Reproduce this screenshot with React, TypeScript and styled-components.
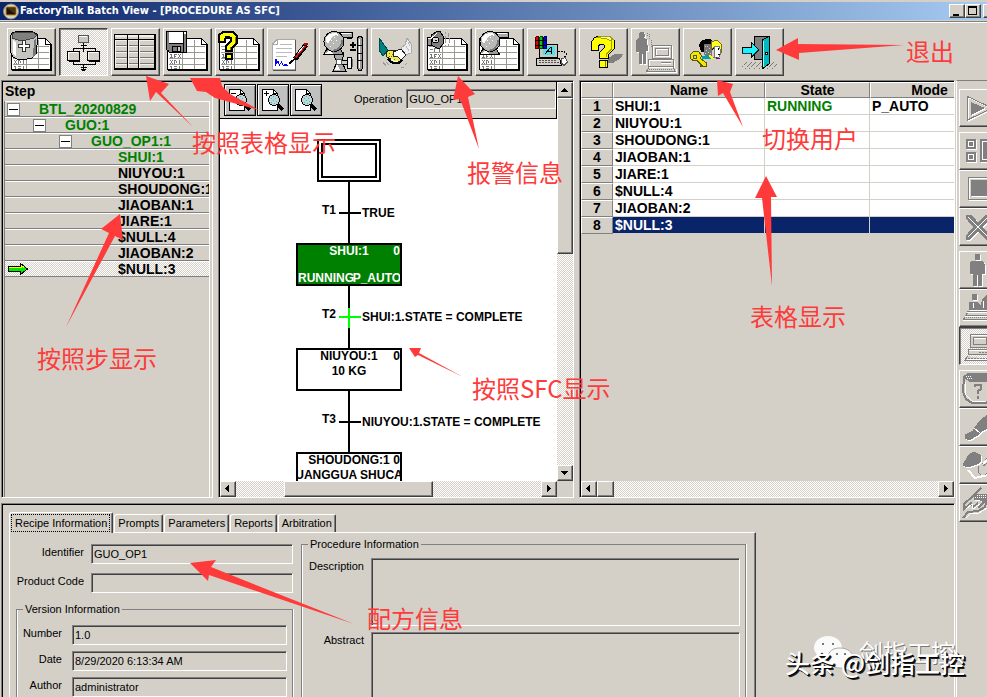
import React from "react";
import styled, { createGlobalStyle, css } from "styled-components";

const face = "#d4d0c8";
const dark = "#404040";
const mid = "#808080";
const navy = "#0a246a";
const green = "#008000";
const red = "#fe3b3a";
const dither = css`
  background: repeating-conic-gradient(#ffffff 0 25%, ${face} 0 50%) 0 0 / 2px 2px;
`;

const GlobalStyle = createGlobalStyle`
  * { box-sizing: border-box; }
  body { margin: 0; background: ${face}; overflow: hidden; }
  button, input, textarea { font: inherit; color: inherit; }
`;

const Window = styled.div`
  position: relative;
  display: flex;
  flex-direction: column;
  height: 100vh;
  padding-top: 2px;
  overflow: hidden;
  background: ${face};
  color: #000;
  font: 11px/14px "Liberation Sans", Arial, sans-serif;
`;

const TitleBar = styled.header`
  display: flex;
  align-items: center;
  flex: none;
  height: 18px;
  padding-left: 3px;
  background: linear-gradient(90deg, ${navy}, #a6caf0);
  color: #fff;
  overflow: hidden;
`;
const Title = styled.h1`
  flex: 1;
  margin: 0 0 0 1px;
  font: bold 11px/18px "DejaVu Sans Condensed", "DejaVu Sans", sans-serif;
  white-space: nowrap;
`;
const Caption = styled.div`
  display: flex;
  flex: none;
  margin-right: -12px;
`;
const raised = css`
  border: 1px solid;
  border-color: #fff ${dark} ${dark} #fff;
  box-shadow: inset -1px -1px ${mid};
  background: ${face};
  padding: 0;
`;
const CaptionButton = styled.button<{ $gap?: boolean }>`
  ${raised}
  width: 16px;
  height: 14px;
  margin-left: ${(p) => (p.$gap ? "2px" : "0")};
  svg { display: block; }
`;

const Toolbar = styled.nav`
  display: flex;
  flex: none;
  gap: 3px;
  margin-top: 1px;
  padding: 6px 7px 4px;
  border-top: 1px solid ${mid};
  box-shadow: inset 0 1px #fff;
  height: 59px;
`;
const sunken = css`
  border: 1px solid;
  border-color: ${dark} #fff #fff ${dark};
  box-shadow: inset 1px 1px ${mid};
  padding: 0;
  ${dither}
`;
const ToolButton = styled.button<{ $pressed?: boolean }>`
  ${(p) => (p.$pressed ? sunken : raised)}
  flex: none;
  width: 49px;
  height: 48px;
  svg { display: block; margin: -1px; }
`;

const Body = styled.div`
  display: flex;
  flex: 1;
  min-height: 0;
`;
const Work = styled.div`
  display: flex;
  flex-direction: column;
  flex: 1;
  min-width: 0;
  gap: 5px;
  padding: 0 1px;
`;
const Panes = styled.main`
  display: grid;
  flex: 1;
  min-height: 0;
  grid-template-columns: 212fr 356fr 376fr;
  gap: 5px;
`;
const Pane = styled.section`
  display: flex;
  flex-direction: column;
  min-width: 0;
  min-height: 0;
  overflow: hidden;
  border: 1px solid;
  border-color: ${mid} #fff #fff ${mid};
  box-shadow: inset 1px 1px #000;
  padding: 1px 0 0 1px;
`;

const StepHeader = styled.h2`
  flex: none;
  margin: 0;
  padding: 0 2px;
  font: bold 14px/19px "Liberation Sans", Arial, sans-serif;
`;
const StepList = styled.ul`
  flex: 1;
  margin: 0 2px 0 1px;
  padding: 0;
  list-style: none;
  border-left: 1px solid ${mid};
  border-right: 1px solid #fff;
  font: bold 14px/14px "Liberation Sans", Arial, sans-serif;
`;
const StepRow = styled.li<{ $level: number; $active?: boolean; $current?: boolean }>`
  display: flex;
  align-items: center;
  height: 16px;
  padding-left: ${(p) => 2 + p.$level * 26}px;
  overflow: hidden;
  white-space: nowrap;
  border-top: 1px solid #fff;
  border-bottom: 1px solid ${mid};
  color: ${(p) => (p.$active ? green : "#000")};
  ${(p) => p.$current && dither}
`;
const StepName = styled.span<{ $leaf?: boolean }>`
  padding-left: ${(p) => (p.$leaf ? "7px" : "19px")};
`;
const Toggle = styled.button`
  flex: none;
  width: 13px;
  height: 13px;
  padding: 0;
  border: 1px solid ${mid};
  background: #fff;
  svg { display: block; }
`;
const CurrentMark = styled.span`
  flex: none;
  width: 104px;
  svg { display: block; }
`;

const ScrollGrid = styled.div`
  display: grid;
  flex: 1;
  min-height: 0;
  grid-template: minmax(0, 1fr) 16px / minmax(0, 1fr) 16px;
`;
const SfcMain = styled.div`
  display: flex;
  flex-direction: column;
  min-width: 0;
  background: #fff;
`;
const SfcBar = styled.div`
  display: flex;
  align-items: flex-start;
  flex: none;
  gap: 1px;
  height: 37px;
  padding: 2px 0 0 4px;
  background: ${face};
  border-right: 1px solid #000;
  border-bottom: 1px solid #000;
`;
const ZoomButton = styled.button`
  flex: none;
  width: 32px;
  height: 32px;
  padding: 0;
  background: #c0c0c0;
  border: 1px solid #000;
  box-shadow: inset 1px 1px #fff, inset -1px -1px ${mid};
  svg { display: block; }
`;
const OperationField = styled.label`
  display: flex;
  flex: 1;
  min-width: 0;
  align-items: center;
  gap: 4px;
  margin: 5px 0 0 31px;
`;
const fieldBox = css`
  min-width: 0;
  border: 1px solid;
  border-color: ${mid} #fff #fff ${mid};
  border-radius: 0;
  box-shadow: inset 1px 1px ${dark};
  background: ${face};
  outline: 0;
`;
const TextField = styled.input`
  ${fieldBox}
  flex: 1;
  height: 20px;
  padding: 0 2px;
`;
const Canvas = styled.div`
  position: relative;
  flex: 1;
  overflow: hidden;
  font: bold 12px/14px "Liberation Sans", Arial, sans-serif;
  white-space: nowrap;
`;
const StartNode = styled.div`
  position: absolute;
  left: 97px;
  top: 20px;
  width: 64px;
  height: 43px;
  border: 6px double #000;
`;
const Link = styled.div<{ $top: number; $height: number; $lit?: boolean }>`
  position: absolute;
  left: 128px;
  top: ${(p) => p.$top}px;
  width: 2px;
  height: ${(p) => p.$height}px;
  background: ${(p) => (p.$lit ? "#00ff00" : "#000")};
`;
const Transition = styled.div<{ $top: number; $lit?: boolean }>`
  position: absolute;
  left: 119px;
  top: ${(p) => p.$top}px;
  width: 22px;
  height: 2px;
  background: ${(p) => (p.$lit ? "#00ff00" : "#000")};
`;
const TransitionName = styled.span`
  position: absolute;
  right: 25px;
  bottom: -3px;
`;
const Condition = styled.span`
  position: absolute;
  left: 23px;
  top: -6px;
`;
const StepNode = styled.div<{ $top: number; $running?: boolean }>`
  position: absolute;
  left: 76px;
  top: ${(p) => p.$top}px;
  display: flex;
  flex-direction: column;
  width: 106px;
  height: 43px;
  overflow: hidden;
  border: 2px solid #000;
  text-align: center;
  line-height: 13px;
  background: ${(p) => (p.$running ? green : "#fff")};
  color: ${(p) => (p.$running ? "#fff" : "#000")};
`;
const NodeIndex = styled.span`
  position: absolute;
  right: 0;
  top: 0;
`;
const NodeStatus = styled.div`
  display: flex;
  justify-content: space-between;
  margin-top: auto;
  line-height: 12px;
  span { min-width: 0; }
`;
const NodeText = styled.div`
  display: flex;
  justify-content: center;
  line-height: 16px;
`;

const ScrollTrack = styled.div<{ $vertical?: boolean }>`
  display: flex;
  flex-direction: ${(p) => (p.$vertical ? "column" : "row")};
  min-width: 0;
  min-height: 0;
  ${dither}
`;
const ScrollButton = styled.button`
  ${raised}
  flex: none;
  width: 16px;
  height: 16px;
  svg { display: block; }
`;
const Thumb = styled.div<{ $size: number }>`
  ${raised}
  flex: ${(p) => p.$size} 1 0;
`;
const Gap = styled.div<{ $share: number }>`
  flex: ${(p) => p.$share} 1 0;
`;

const TableArea = styled.div`
  flex: 1;
  overflow: hidden;
`;
const StateTable = styled.table`
  width: 408px;
  table-layout: fixed;
  border-collapse: separate;
  border-spacing: 0;
  font: bold 14px/16px "Liberation Sans", Arial, sans-serif;
`;
const NumberCol = styled.col` width: 32px; `;
const NameCol = styled.col` width: 152px; `;
const StateCol = styled.col` width: 105px; `;
const ModeCol = styled.col` width: 119px; `;
const HeadCell = styled.th`
  height: 16px;
  padding: 0;
  line-height: 14px;
  border: 1px solid;
  border-color: #fff ${mid} ${mid} #fff;
`;
const RowHead = styled.th`
  height: 17px;
  padding: 0;
  line-height: 15px;
  border: 1px solid;
  border-color: #fff ${mid} ${mid} #fff;
`;
const Cell = styled.td<{ $selected?: boolean; $running?: boolean }>`
  height: 17px;
  padding: 0 2px;
  background: ${(p) => (p.$selected ? navy : "#fff")};
  color: ${(p) => (p.$selected ? "#fff" : p.$running ? green : "#000")};
  border: 0 solid ${face};
  border-bottom-width: 1px;
  border-right-width: 1px;
`;

const Details = styled.section`
  flex: none;
  height: 194px;
  overflow: hidden;
  border-top: 1px solid ${mid};
  border-left: 1px solid ${mid};
  border-right: 1px solid #fff;
  box-shadow: inset 1px 1px #000;
  padding: 8px 0 0 7px;
`;
const Tabs = styled.div`
  display: flex;
  align-items: flex-end;
  height: 20px;
`;
const Tab = styled.button<{ $selected?: boolean }>`
  position: relative;
  height: ${(p) => (p.$selected ? "21px" : "18px")};
  margin: ${(p) => (p.$selected ? "0 0 -1px" : "0 0 0 1px")};
  padding: 0 ${(p) => (p.$selected ? "5px" : "3px")};
  background: ${face};
  border: 1px solid;
  border-color: #fff ${dark} transparent #fff;
  border-bottom: 0;
  border-radius: 3px 2px 0 0;
  box-shadow: inset -1px 0 ${mid};
  white-space: nowrap;
  line-height: 17px;
`;
const Focus = styled.span`
  position: absolute;
  inset: 1px 2px 1px 1px;
  border: 1px dotted #000;
`;
const TabPage = styled.form`
  display: grid;
  grid-template-columns: 284px minmax(0, 1fr);
  gap: 1px;
  width: 79%;
  min-width: 600px;
  height: 240px;
  padding: 0 9px 0 6px;
  border: 1px solid;
  border-color: #fff ${dark} ${dark} #fff;
  box-shadow: inset -1px 0 ${mid};
`;
const Column = styled.div`
  display: flex;
  flex-direction: column;
  gap: 9px;
  padding: 11px 7px 0 0;
`;
const Field = styled.label<{ $label: number; $gap?: number }>`
  display: grid;
  grid-template-columns: ${(p) => p.$label}px minmax(0, 1fr);
  gap: ${(p) => p.$gap ?? 7}px;
  line-height: 17px;
`;
const LabelText = styled.span`
  text-align: right;
`;
const Group = styled.fieldset`
  display: flex;
  flex-direction: column;
  gap: 6px;
  min-width: 0;
  margin: 0;
  padding: 3px 5px 8px 4px;
  border: 1px solid ${mid};
  box-shadow: inset 1px 0 #fff, 1px 0 #fff;
`;
const Legend = styled.legend`
  margin-left: 2px;
  padding: 0 2px;
  line-height: 14px;
`;
const VersionGroup = styled(Group)`
  padding-top: 9px;
`;
const InfoGroup = styled(Group)`
  margin-top: 4px;
  padding-top: 7px;
  height: 230px;
`;
const Memo = styled.textarea`
  ${fieldBox}
  height: 68px;
  resize: none;
  display: block;
`;

const Side = styled.aside`
  flex: none;
  width: 31px;
  overflow: hidden;
  border-left: 1px solid #fff;
  border-top: 1px solid ${mid};
  padding: 8px 0 0 2px;
`;
const SideGroup = styled.div`
  display: flex;
  flex-direction: column;
  margin-bottom: 5px;
`;
const SideButton = styled.button<{ $pressed?: boolean }>`
  ${(p) => (p.$pressed ? sunken : raised)}
  width: 40px;
  height: 38px;
  svg { display: block; margin: -1px; }
`;

const Overlay = styled.div`
  position: absolute;
  inset: 0;
  pointer-events: none;
`;
const Arrows = styled.svg`
  position: absolute;
  left: 0;
  top: 0;
`;
const Note = styled.span<{ $x: number; $y: number }>`
  position: absolute;
  left: ${(p) => p.$x}px;
  top: ${(p) => p.$y}px;
  color: ${red};
  font: 24px/28px "Noto Sans CJK SC", sans-serif;
  white-space: nowrap;
`;
const Mark = styled.span<{ $x: number; $y: number; $strong?: boolean }>`
  position: absolute;
  left: ${(p) => p.$x}px;
  top: ${(p) => p.$y}px;
  color: #fff;
  font: ${(p) => (p.$strong ? "500 25px" : "400 24px")}/28px "Noto Sans CJK SC", sans-serif;
  text-shadow: ${(p) => (p.$strong ? "1px 1px #000, 2px 2px #222" : "1px 1px #777")};
  white-space: nowrap;
`;

/* ---------- toolbar drawings, 49 x 48 ---------- */

const Icon = ({ children, w = 49, h = 48 }: { children: React.ReactNode; w?: number; h?: number }) => (
  <svg width={w} height={h} viewBox={`0 0 ${w} ${h}`} shapeRendering="crispEdges" aria-hidden="true" fill="none">
    {children}
  </svg>
);

const Sheet = () => (
  <>
    <path d="M4.5 10.5H38.5L44.5 16.5V41.5H4.5Z" fill="#fff" stroke="#000" />
    <path d="M38.5 10.5V16.5H44.5M43.5 17V41M5 42.5H45" stroke="#000" />
    <path d="M19.5 12V41M31.5 12V41M6 18.5H42M6 24.5H42M6 30.5H42M6 36.5H42" stroke="#9a9a92" />
    <path
      d="M7 26.5H9M8.5 26V29M7 29.5H10M11 26.5H14M11.5 26V30M11 28.5H13M15.5 26V27M17.5 26V27M16.5 27V29M15.5 29V30M17.5 29V30M7.5 32V33M9.5 32V33M8.5 33V35M7.5 35V36M9.5 35V36M11.5 32V36M11 32.5H13M13.5 33V35M16.5 32V36M7 38.5H9M8.5 38V41M11 38.5H14M11 40.5H14M16.5 38V41M7 21.5H10M11 20.5H14M11.5 20V24M16.5 20V24"
      stroke="#777"
    />
  </>
);

const Flask = () => (
  <>
    <path d="M16 4.5H33.5V9H24" fill="#aaa" stroke="#000" />
    <path d="M17 5.5H32" stroke="#fff" />
    <path d="M28 10.5H33" stroke="#000" />
    <path d="M8 21L4.5 26.5H24.5L21 20Z" fill="#999" stroke="#000" />
    <path d="M6 25.5H14L12 22Z" fill="#fff" />
    <circle cx="15" cy="13.5" r="10" fill="#b8b8b4" stroke="#000" />
    <path d="M7 14V10L10 6L15 5L20 6L13 9L9 16Z" fill="#fff" />
    <path d="M12 12h1M15 9h1M18 7h1M14 15h1M17 12h1M11 18h1" stroke="#fff" />
    <path d="M23 12v4l-4 5l-5 2" stroke="#777" strokeWidth="2" />
  </>
);

const Pot = () => (
  <Icon>
    <Sheet />
    <path d="M3.5 8L5 5L9 3.5H25L30 6L31 9L29 26L25 30L18 31.5H11L6 29L3.5 24Z" fill="#c4c4c0" stroke="#000" />
    <path d="M5 6L9 4H25L30 7L27 10L19 12H11L5 10Z" fill="#808080" stroke="#444" />
    <path d="M6 12L9 14V28L6 26Z" fill="#fff" />
    <path d="M27 12L29 10V26L26 29Z" fill="#777" />
    <path d="M15.5 12.5H18.5V16.5H22.5V19.5H18.5V23.5H15.5V19.5H11.5V16.5H15.5Z" fill="#fff" stroke="#333" />
  </Icon>
);

const Chart = () => (
  <Icon>
    <path d="M24.5 15V24M22 17.5H28M14.5 23V20.5H36.5V23M14.5 33V36.5H36.5V33M24.5 36V43M22 39.5H28" stroke="#000" />
    <path d="M22 41.5H27M23 42.5H26" stroke="#000" />
    <path d="M19.5 7.5H29.5V14.5H19.5Z" fill="#c8c8c4" stroke="#555" />
    <path d="M8.5 23.5H20.5V32.5H8.5ZM28.5 23.5H40.5V32.5H28.5Z" fill="#d4d0c8" stroke="#000" />
    <path d="M9 24.5H19M9.5 24V31M29 24.5H39M29.5 24V31M20 8.5H28" stroke="#fff" />
    <path d="M20.5 24V33H10M40.5 24V33H30" stroke="#000" />
  </Icon>
);

const Grid = () => (
  <Icon>
    <path d="M3.5 6.5H44.5V41.5H3.5Z" fill={face} stroke="#000" />
    <path d="M4 8H44" stroke="#eee" strokeWidth="2" />
    <path d="M4 17.5H43M4 23.5H43M4 29.5H43M4 35.5H43" stroke="#777" />
    <path d="M4 12.5H43M4 18.5H43M4 24.5H43M4 30.5H43M4 36.5H43M4.5 12V40M17.5 12V40M28.5 12V40" stroke="#f0f0ec" />
    <path d="M4 11.5H44M16.5 7V41M27.5 7V41M43.5 7V41M4 40.5H44" stroke="#000" />
  </Icon>
);

const Save = () => (
  <Icon>
    <Sheet />
    <path d="M3 3H24V25H6L3 22Z" fill="#000" />
    <path d="M4 4H6V22H4ZM21 6H23V24H21Z" fill="#808080" />
    <path d="M6 16H20V24H6Z" fill="#808080" />
    <path d="M6 4H20V15H6Z" fill="#fff" />
    <path d="M9 18H18V24H9Z" fill="#000" />
    <path d="M10 19H14V23H10Z" fill="#808080" />
    <path d="M15 19H17V23H15Z" fill="#d4d0c8" />
    <path d="M21 4H23V6H21Z" fill="#fff" />
  </Icon>
);

const Query = () => (
  <Icon>
    <Sheet />
    <path d="M4 12V7L8 4H18L22 8V15L17 20V23H11V18L16 13V10L14 9H11L10 11V14H4Z" fill="#ffff00" stroke="#000" strokeWidth="2" />
    <path d="M11 26H17V31H11Z" fill="#ffff00" stroke="#000" strokeWidth="2" />
    <path d="M20.5 9V15M15.5 19V22" stroke="#808000" />
  </Icon>
);

const Sign = () => (
  <Icon>
    <path d="M10 11.5H28.5V41.5H5.5V16Z" fill="#fff" stroke="#aaa" />
    <path d="M10.5 12V16.5H5" stroke="#aaa" />
    <path d="M28.5 12V42H6" stroke="#555" />
    <path d="M13 16.5H25M9 20.5H25M9 24.5H25M9 28.5H20" stroke="#bbb" />
    <path d="M8.5 31V37L11 33.5L12.5 37L14.5 34L16 37H21" stroke="#0000ff" />
    <path d="M9.5 31V36M17 36.5H20" stroke="#0000ff" />
    <path d="M39 17L28 31" stroke="#000" strokeWidth="5" />
    <path d="M38 18L28 30" stroke="#d01818" strokeWidth="2" />
    <path d="M37 18L31 25" stroke="#fff" />
    <path d="M29 30L24 34L22 36" stroke="#000" strokeWidth="2" />
    <path d="M37 16H41" stroke="#c00000" strokeWidth="2" />
  </Icon>
);

const Valve = () => (
  <Icon>
    <path d="M18 24L25 25L23 34L27 43H14L18 34L15 28Z" fill="#aaa" stroke="#000" />
    <path d="M18 36L16 42H21Z" fill="#fff" />
    <path d="M22.5 32.5H28.5V36.5H22.5Z" fill="#ccc" stroke="#000" />
    <path d="M28.5 29.5H32.5V40.5H28.5Z" fill="#eee" stroke="#000" />
    <path d="M33.5 31V39" stroke="#777" />
    <Flask />
    <circle cx="20" cy="34" r="3" fill="#fff" stroke="#555" />
    <path d="M34 14V20M31 17H37M31 22H37" stroke="#000" strokeWidth="2" />
    <path d="M38.5 10L40 8.5H42L43.5 10V40L42 42.5H40L38.5 40Z" fill="#999" stroke="#000" />
    <path d="M40.5 11V40" stroke="#fff" />
    <path d="M39 17.5H43M39 25.5H43M39 32.5H43" stroke="#000" />
  </Icon>
);

const Handshake = () => (
  <Icon>
    <path d="M8 10L11 14L17 22L12 28L8 22Z" fill="#008080" stroke="#004c4c" />
    <path d="M36 10L40 16V25L34 27L30 20L34 17Z" fill="#eee" stroke="#aaa" />
    <path d="M37 14L39 18M35 18L38 23" stroke="#bbb" />
    <path d="M15 24L19 22H25L32 29L30 33L25 34L16 29Z" fill="#ecec50" stroke="#222" />
    <path d="M22 24L30 21L35 27L30 32L27 29L22 28Z" fill="#fff" stroke="#222" />
    <path d="M17 31L20 34L23 35H28L31 32" stroke="#000" strokeWidth="2" />
    <path d="M20 31L23 33H27" stroke="#fff" />
    <path d="M18 25h1M21 26h1M20 28h1M23 31h1M18 28h1" stroke="#807000" />
    <path d="M12 34L15 38M15 34L18 37M34 37L36 35M30 39H33" stroke="#999" />
  </Icon>
);

const Alarm = () => (
  <Icon>
    <Sheet />
    <path d="M4 9H11V17H4Z" fill="#909090" stroke="#000" />
    <path d="M8 7L14 3.5H17L20 8V16L17 20H14L8 17Z" fill="#808080" stroke="#000" />
    <path d="M5 10.5H8L14 5" stroke="#fff" />
    <circle cx="12.5" cy="12" r="3" fill="#ddd" stroke="#000" />
    <path d="M12 12.5h2" stroke="#000" />
    <path d="M22.5 8V15M22.5 4V6M22.5 17V19M25.5 5V9M26.5 10V15M25.5 16V18" stroke="#999" />
  </Icon>
);

const FlaskSheet = () => (
  <Icon>
    <Sheet />
    <Flask />
  </Icon>
);

const Computer = () => (
  <Icon>
    <path d="M12.5 16.5H30.5V29.5H12.5Z" fill="#c8c8c4" stroke="#000" />
    <path d="M16 18H28V27H16Z" fill="#55e0e8" />
    <path d="M18 26L24 19L25 26M20 23.5H25" stroke="#000" />
    <path d="M9.5 30.5H32.5L34.5 37.5H9.5Z" fill="#d4d0c8" stroke="#000" />
    <path d="M12 32.5H30M12 34.5H32" stroke="#555" strokeDasharray="2 1" />
    <path d="M8.5 10L10 8H11.5V20.5H8.5Z" fill="#e00000" stroke="#500" />
    <path d="M12.5 10L14 8H15.5V20.5H12.5Z" fill="#00d000" stroke="#040" />
    <path d="M16.5 10L18 8H19.5V20.5H16.5Z" fill="#0000e0" stroke="#005" />
    <path d="M8 12.5h12M8 17.5h12" stroke="#000" />
    <path d="M31 24L36 23L39 25V28L36 30" stroke="#000" strokeDasharray="2 1" />
    <path d="M34.5 31L38 29.5L40.5 34L37 37.5L34.5 35Z" fill="#fff" stroke="#555" />
  </Icon>
);

const Help = () => (
  <Icon>
    <path d="M29 30L36 26H44L42 30L34 35H28Z" fill="#808080" />
    <path d="M12 21V15L15 10L20 8H30L35 12V21L29 27V30H20V25L25 20V17L22 16L19 18V22H12Z" fill="#ffff00" stroke="#000" />
    <path d="M17 9.5L21 8.5H31L34 11.5L31 12.5L27 10.5Z" fill="#fffba0" stroke="#a0a000" />
    <path d="M32.5 13V21L27.5 26V29" stroke="#a0a000" />
    <path d="M20 32.5H28V39.5H20Z" fill="#ffff00" stroke="#000" />
    <path d="M26.5 33V39" stroke="#808000" />
  </Icon>
);

const PersonPc = () => (
  <Icon>
    <g transform="translate(1 1)" fill="#fff">
      <path d="M9 4H13L14 8L12 10L16 11L17 23H15V36H12V26H11V36H8V24H5V12L8 10V6Z" />
    </g>
    <path d="M9 4H13L14 8L12 10L16 11L17 23H15V36H12V26H11V36H8V24H5V12L8 10V6Z" fill={mid} />
    <path d="M16.5 5V9M18.5 6V12M20.5 12V19" stroke={mid} strokeDasharray="1 1" />
    <path d="M22.5 18.5H41.5V31.5H22.5ZM25.5 21.5H38.5V28.5H25.5Z" stroke="#fff" />
    <path d="M21.5 17.5H40.5V30.5H21.5ZM24.5 20.5H37.5V27.5H24.5Z" stroke={mid} />
    <path d="M18.5 32.5H43.5V39.5H18.5Z" stroke="#fff" />
    <path d="M17.5 31.5H42.5V38.5H17.5ZM30 34.5H40M18 39L15.5 43.5H44.5L42 39" stroke={mid} />
    <path d="M18 41.5H42" stroke={mid} strokeDasharray="1 1" />
    <path d="M16 44.5H45V41M30 35.5H40" stroke="#fff" />
  </Icon>
);

const Users = () => (
  <Icon>
    <path d="M16 17L18 13L23 11H27L30 14L31 21L28 23L18 24Z" fill="#000" />
    <path d="M21 16H29V27L26 30L21 27Z" fill="#777" />
    <path d="M22 18.5h1M24 18.5h1M26 20.5h1M23 22.5h1M25 24.5h1M27 25.5h1M22 25.5h1" stroke="#ccc" />
    <path d="M28 14L34 12L38 16V24H34L31 19L28 22Z" fill="#ffff30" stroke="#807000" />
    <path d="M32 18H36L38 24L36 29H31Z" fill="#fff" stroke="#777" />
    <path d="M35.5 20v2M35 26.5h2" stroke="#000" />
    <path d="M19 28L24 27L29 31H19Z" fill="#00a0a8" />
    <path d="M27 26L31 31H28L25 28Z" fill="#ffff00" />
    <path d="M33 29L38 31H33Z" fill="#800080" />
    <path d="M7.5 26.5L10.5 23.5H15.5L18.5 27.5L17.5 30.5L23.5 35V38.5H20L14 32.5H10L7.5 30.5Z" fill="#f0e800" stroke="#605800" />
    <path d="M10.5 27.5H13V30H10.5Z" fill={face} stroke="#605800" />
    <path d="M17.5 36v3" stroke="#605800" strokeWidth="2" />
  </Icon>
);

const Exit = () => (
  <Icon>
    <path d="M7 39L12 34M10 41L17 34M14 41L21 34M19 41L26 34M32 41L39 34M37 41L42 36M24 41L28 37" stroke="#777" strokeDasharray="2 1" />
    <path d="M19.5 8.5H34.5V31.5H19.5Z" fill="#808080" stroke="#000" />
    <path d="M27 12L34 8.5V36L27 41Z" fill="#00b8c0" stroke="#000" />
    <path d="M28.5 13V39" stroke="#80ffff" />
    <path d="M30 24h2v2h-2z" fill="#fff" stroke="#000" />
    <path d="M7 19H16V14L24 22L16 30V25H7Z" fill="#20f0f8" stroke="#000" />
    <path d="M7 25.5H16M17 28L23 22" stroke="#004060" />
  </Icon>
);

const tools: { label: string; icon: React.ReactNode; pressed?: boolean }[] = [
  { label: "Batch list", icon: <Pot /> },
  { label: "Procedure as SFC", icon: <Chart />, pressed: true },
  { label: "Procedure as table", icon: <Grid /> },
  { label: "Event journal", icon: <Save /> },
  { label: "Unacknowledged prompts", icon: <Query /> },
  { label: "Signatures", icon: <Sign /> },
  { label: "Phase control", icon: <Valve /> },
  { label: "Arbitration", icon: <Handshake /> },
  { label: "Alarms", icon: <Alarm /> },
  { label: "Phase summary", icon: <FlaskSheet /> },
  { label: "Configuration", icon: <Computer /> },
  { label: "Help", icon: <Help /> },
  { label: "Operator", icon: <PersonPc /> },
  { label: "Change user", icon: <Users /> },
  { label: "Exit", icon: <Exit /> },
];

/* ---------- side drawings, etched gray on 40 x 38 ---------- */

const Etched = ({ d, extra }: { d: string; extra?: React.ReactNode }) => (
  <Icon w={40} h={38}>
    <path d={d} fill="#fff" stroke="#fff" transform="translate(1 1)" />
    <path d={d} fill={mid} stroke={mid} />
    {extra}
  </Icon>
);

const Framed = ({ outer, inner }: { outer: string; inner: string }) => (
  <Icon w={40} h={38}>
    <path d={outer} stroke="#fff" transform="translate(1 1)" />
    <path d={outer} stroke={mid} />
    <path d={inner} fill="#fff" transform="translate(1 1)" />
    <path d={inner} fill={mid} />
  </Icon>
);

const sideGroups: { label: string; icon: React.ReactNode; pressed?: boolean }[][] = [
  [{ label: "Start", icon: <Framed outer="M8.5 7.5L33 19L8.5 31Z" inner="M12 13L26 19L12 26Z" /> }],
  [
    {
      label: "Hold",
      icon: (
        <Etched
          d="M7.5 7.5H16.5V16.5H7.5ZM7.5 20.5H16.5V29.5H7.5ZM21.5 7.5H34.5V29.5H21.5Z"
          extra={<path d="M9.5 9.5H14.5V14.5H9.5ZM9.5 22.5H14.5V27.5H9.5ZM23.5 9.5H32.5V27.5H23.5Z" stroke="#fff" />}
        />
      ),
    },
    { label: "Stop", icon: <Framed outer="M9.5 7.5H30.5V29.5H9.5Z" inner="M12 10H28V26H12Z" /> },
    {
      label: "Abort",
      icon: (
        <Etched
          d="M8 7L12 7L19 15L27 7H31V11L23 19L31 28V31H27L19 23L11 31H7V28L15 19L7 10Z"
          extra={<path d="M9 9L29 29M29 9L9 29" stroke="#fff" />}
        />
      ),
    },
  ],
  [
    {
      label: "Manual",
      icon: <Etched d="M16 3H20V8H16ZM13 10H23L25 13V22H23V15H22V34H19V23H17V34H14V15H13V22H11V13Z" />,
    },
    {
      label: "Semi-automatic",
      icon: (
        <Etched
          d="M13 5H17V10H13ZM10 13H18L22 17L24 10L27 7V14L30 16L35 11V17L30 20H10Z"
          extra={
            <>
              <path d="M14 14V19M24 12V19" stroke="#fff" />
              <path d="M8 22.5H38M6 26.5H38M4 30.5H38M9 23L4 31" stroke={mid} />
              <path d="M8 23.5H38M6 27.5H38M4 31.5H38" stroke="#fff" />
              <path d="M7 28.5H38" stroke={mid} strokeDasharray="1 1" />
            </>
          }
        />
      ),
    },
    {
      label: "Automatic",
      pressed: true,
      icon: (
        <Icon w={40} h={38}>
          <path d="M11.5 7.5H30.5V20.5H11.5ZM14.5 10.5H27.5V17.5H14.5ZM9.5 22.5H34.5V27.5H9.5ZM9 29L5.5 33.5H38" fill={face} stroke={mid} />
          <path d="M12 8.5H30M15 11.5H27M10 23.5H34M8 32H36" stroke="#fff" />
          <path d="M20 25.5H31M9 31.5H36" stroke={mid} strokeDasharray="2 1" />
        </Icon>
      ),
    },
  ],
  [
    {
      label: "Acquire",
      icon: (
        <Icon w={40} h={38}>
          <path d="M5 7L9 4H30L35 8L33 28L27 33H13L7 29L4 22Z" fill={face} stroke={mid} strokeWidth="2" />
          <path d="M5 8L9 4H30L34 8L29 12H11Z" fill={mid} />
          <path d="M6 12V24L13 31H27" stroke="#fff" />
          <path d="M7 6.5h6M8 8.5h6" stroke="#fff" strokeDasharray="1 1" />
          <path d="M16 17V15H22V19L19 21V24M19 26V29" stroke={mid} strokeWidth="2" />
        </Icon>
      ),
    },
    { label: "Pause", icon: <Etched d="M33 5L24 10L16 19L14 23L6 27V30L10 32L19 27L23 23L37 16V5Z" extra={<path d="M15 20L21 25" stroke="#fff" />} /> },
    {
      label: "Disconnect",
      icon: (
        <Etched
          d="M4 19L10 9L15 6L21 9V16L18 18L9 21Z"
          extra={
            <>
              <path d="M23 18L34 6M19 20V26L24 31L34 21V13L24 20" stroke={mid} />
              <path d="M9 24L16 32L29 29L36 22M24 18L35 7" stroke="#fff" strokeWidth="2" />
            </>
          }
        />
      ),
    },
    {
      label: "Release",
      icon: (
        <Etched
          d="M15 12L18 10H38V15H28L25 18L19 15H15Z"
          extra={
            <>
              <path d="M16 14L30 13M18 11.5H38" stroke="#fff" strokeDasharray="1 1" />
              <path d="M22 4L14 12L5 20V25L12 19L14 23L19 19M28 15L26 23L19 27L9 28L4 34M25 18L19 24" stroke={mid} strokeWidth="2" />
              <path d="M7 34L11 30L20 29L28 24M7 25L13 20L14 25L21 20" stroke="#fff" />
            </>
          }
        />
      ),
    },
  ],
];

const Arrow = ({ d }: { d: string }) => (
  <svg width="14" height="14" viewBox="0 0 14 14" shapeRendering="crispEdges" aria-hidden="true">
    <path d={d} fill="#000" />
  </svg>
);
const arrows = {
  up: "M3 9H10L6.5 5Z",
  down: "M3 5H10L6.5 9Z",
  left: "M8 3V10L4 6.5Z",
  right: "M5 3V10L9 6.5Z",
};

const Magnify = ({ sign }: { sign?: string }) => (
  <svg width="30" height="30" viewBox="0 0 30 30" shapeRendering="crispEdges" aria-hidden="true" fill="none">
    <path d="M4.5 4.5H15.5L19.5 8.5V25.5H4.5Z" fill="#fff" stroke="#000" />
    <path d="M15.5 4.5V8.5H19.5" stroke="#000" />
    {sign && <path d={sign} stroke="#000" />}
    <circle cx="16" cy="15" r="5.5" fill="#c8d4d4" stroke="#000" />
    <path d="M13 13.5h1M15 11.5h1M17 13.5h1M15 15.5h1M13 17.5h1M18 16.5h1M16 18.5h1" stroke="#00d8e0" />
    <path d="M20 20L25 25" stroke="#000" strokeWidth="3" />
  </svg>
);

const steps = [
  { name: "BTL_20200829", level: 0, active: true },
  { name: "GUO:1", level: 1, active: true },
  { name: "GUO_OP1:1", level: 2, active: true },
  { name: "SHUI:1", level: 4, active: true },
  { name: "NIUYOU:1", level: 4 },
  { name: "SHOUDONG:1", level: 4 },
  { name: "JIAOBAN:1", level: 4 },
  { name: "JIARE:1", level: 4 },
  { name: "$NULL:4", level: 4 },
  { name: "JIAOBAN:2", level: 4 },
  { name: "$NULL:3", level: 0, current: true },
];

const rows = [
  ["SHUI:1", "RUNNING", "P_AUTO"],
  ["NIUYOU:1", "", ""],
  ["SHOUDONG:1", "", ""],
  ["JIAOBAN:1", "", ""],
  ["JIARE:1", "", ""],
  ["$NULL:4", "", ""],
  ["JIAOBAN:2", "", ""],
  ["$NULL:3", "", ""],
];

function StepPane() {
  return (
    <Pane aria-label="Steps">
      <StepHeader>Step</StepHeader>
      <StepList>
        {steps.map((s) => (
          <StepRow key={s.name} $level={s.level} $active={s.active} $current={s.current}>
            {s.level < 4 && !s.current && (
              <Toggle aria-label={`Collapse ${s.name}`}>
                <svg width="11" height="11" viewBox="0 0 11 11" shapeRendering="crispEdges">
                  <path d="M1 5H10V6H1Z" fill="#000" />
                </svg>
              </Toggle>
            )}
            {s.current && (
              <CurrentMark>
                <svg width="23" height="14" viewBox="0 0 23 14" shapeRendering="crispEdges">
                  <path d="M1.5 4.5H13.5V1.5L20.5 7L13.5 12.5V9.5H1.5Z" fill="#00e800" stroke="#000" />
                  <path d="M2 5.5H14V3L17 5.5" stroke="#ffff00" fill="none" />
                </svg>
              </CurrentMark>
            )}
            <StepName $leaf={s.level === 4 || s.current}>{s.name}</StepName>
          </StepRow>
        ))}
      </StepList>
    </Pane>
  );
}

function SfcPane() {
  return (
    <Pane aria-label="SFC">
      <ScrollGrid>
        <SfcMain>
          <SfcBar>
            <ZoomButton aria-label="Zoom out"><Magnify sign="M6 8.5H11" /></ZoomButton>
            <ZoomButton aria-label="Zoom in"><Magnify sign="M6 8.5H11M8.5 6V11" /></ZoomButton>
            <ZoomButton aria-label="Zoom page"><Magnify /></ZoomButton>
            <OperationField>
              Operation
              <TextField readOnly value="GUO_OP1" />
            </OperationField>
          </SfcBar>
          <Canvas>
            <StartNode />
            <Link $top={63} $height={61} />
            <Transition $top={93}>
              <TransitionName>T1</TransitionName>
              <Condition>TRUE</Condition>
            </Transition>
            <StepNode $top={124} $running>
              SHUI:1
              <NodeIndex>0</NodeIndex>
              <NodeStatus><span>RUNNING</span><span>P_AUTO</span></NodeStatus>
            </StepNode>
            <Link $top={167} $height={62} />
            <Link $top={189} $height={20} $lit />
            <Transition $top={197} $lit>
              <TransitionName>T2</TransitionName>
              <Condition>SHUI:1.STATE = COMPLETE</Condition>
            </Transition>
            <StepNode $top={229}>
              NIUYOU:1
              <NodeIndex>0</NodeIndex>
              <NodeText>10 KG</NodeText>
            </StepNode>
            <Link $top={272} $height={61} />
            <Transition $top={302}>
              <TransitionName>T3</TransitionName>
              <Condition>NIUYOU:1.STATE = COMPLETE</Condition>
            </Transition>
            <StepNode $top={333}>
              SHOUDONG:1
              <NodeIndex>0</NodeIndex>
              <NodeText>UANGGUA SHUCA</NodeText>
            </StepNode>
          </Canvas>
        </SfcMain>
        <ScrollTrack $vertical>
          <ScrollButton aria-label="Scroll up"><Arrow d={arrows.up} /></ScrollButton>
          <Thumb $size={155} />
          <Gap $share={213} />
          <ScrollButton aria-label="Scroll down"><Arrow d={arrows.down} /></ScrollButton>
        </ScrollTrack>
        <ScrollTrack>
          <ScrollButton aria-label="Scroll left"><Arrow d={arrows.left} /></ScrollButton>
          <Gap $share={48} />
          <Thumb $size={148} />
          <Gap $share={109} />
          <ScrollButton aria-label="Scroll right"><Arrow d={arrows.right} /></ScrollButton>
        </ScrollTrack>
      </ScrollGrid>
    </Pane>
  );
}

function TablePane() {
  return (
    <Pane aria-label="Table">
      <TableArea>
        <StateTable>
          <colgroup>
            <NumberCol /><NameCol /><StateCol /><ModeCol />
          </colgroup>
          <thead>
            <tr>
              <HeadCell /><HeadCell>Name</HeadCell><HeadCell>State</HeadCell><HeadCell>Mode</HeadCell>
            </tr>
          </thead>
          <tbody>
            {rows.map((r, i) => (
              <tr key={r[0]}>
                <RowHead scope="row">{i + 1}</RowHead>
                {r.map((c, j) => (
                  <Cell key={j} $selected={i === 7} $running={j === 1}>{c}</Cell>
                ))}
              </tr>
            ))}
          </tbody>
        </StateTable>
      </TableArea>
      <ScrollTrack>
        <ScrollButton aria-label="Scroll left"><Arrow d={arrows.left} /></ScrollButton>
        <Thumb $size={15} />
        <Gap $share={326} />
        <ScrollButton aria-label="Scroll right"><Arrow d={arrows.right} /></ScrollButton>
      </ScrollTrack>
    </Pane>
  );
}

function DetailsPane() {
  return (
    <Details>
      <Tabs role="tablist">
        <Tab role="tab" aria-selected $selected>Recipe Information<Focus /></Tab>
        {["Prompts", "Parameters", "Reports", "Arbitration"].map((t) => (
          <Tab role="tab" key={t}>{t}</Tab>
        ))}
      </Tabs>
      <TabPage>
        <Column>
          <Field $label={68}><LabelText>Identifier</LabelText><TextField readOnly value="GUO_OP1" /></Field>
          <Field $label={68}><LabelText>Product Code</LabelText><TextField readOnly value="" /></Field>
          <VersionGroup>
            <Legend>Version Information</Legend>
            <Field $label={41} $gap={10}><LabelText>Number</LabelText><TextField readOnly value="1.0" /></Field>
            <Field $label={41} $gap={10}><LabelText>Date</LabelText><TextField readOnly value="8/29/2020 6:13:34 AM" /></Field>
            <Field $label={41} $gap={10}><LabelText>Author</LabelText><TextField readOnly value="administrator" /></Field>
          </VersionGroup>
        </Column>
        <InfoGroup>
          <Legend>Procedure Information</Legend>
          <Field $label={58}><LabelText>Description</LabelText><Memo readOnly /></Field>
          <Field $label={58}><LabelText>Abstract</LabelText><Memo readOnly /></Field>
        </InfoGroup>
      </TabPage>
    </Details>
  );
}

function Annotations() {
  return (
    <Overlay>
      <Arrows width="987" height="697" viewBox="0 0 987 697" fill={red} aria-hidden="true">
        <path d="M146 76L169 84L161 93L193 127L156 92L150 101Z" />
        <path d="M190 78H220L222 86L230 94L259 110L215 98L206 92L197 91Z" />
        <path d="M458 76L475 94L468 97L479 149L460 99L453 100Z" />
        <path d="M776 50L798 38V44L904 45L799 53V60Z" />
        <path d="M717 80L733 84L730 92L743 127L723 93L718 96Z" />
        <path d="M766 176L777 197H771L772 286L762 198H755Z" />
        <path d="M409 348H421L419 353L463 377L418 355L415 357Z" />
        <path d="M120 214L123 240L115 236L66 327L109 233L101 229Z" />
        <path d="M190 563L216 560L211 567L354 624L209 575L208 581Z" />
      </Arrows>
      <Note $x={192} $y={128}>按照表格显示</Note>
      <Note $x={467} $y={158}>报警信息</Note>
      <Note $x={906} $y={37}>退出</Note>
      <Note $x={762} $y={124}>切换用户</Note>
      <Note $x={750} $y={302}>表格显示</Note>
      <Note $x={472} $y={374}>按照SFC显示</Note>
      <Note $x={37} $y={344}>按照步显示</Note>
      <Note $x={367} $y={604}>配方信息</Note>
      <Mark $x={859} $y={638}>剑指工控</Mark>
      <Arrows width="987" height="697" viewBox="0 0 987 697" aria-hidden="true">
        <path d="M828 636c8 0 14 5 14 12s-6 11-14 11c-2 0-3 0-5-1l-6 3 2-5c-3-2-5-5-5-8 0-7 6-12 14-12z" fill="#fafafa" />
        <path d="M840 648c7 0 13 4 13 10s-3 7-5 8l1 5-5-3c-9 1-16-3-16-10s5-10 12-10z" fill="#fafafa" stroke="#aaa" />
        <path d="M822 643h2v2h-2zM832 643h2v2h-2zM836 653h2v2h-2zM844 653h2v2h-2z" fill="#777" />
      </Arrows>
      <Mark $x={785} $y={648} $strong>头条 @剑指工控</Mark>
    </Overlay>
  );
}

export default function App() {
  return (
    <>
      <GlobalStyle />
      <Window>
        <TitleBar>
          <svg width="16" height="17" viewBox="0 0 16 17" aria-hidden="true">
            <circle cx="8" cy="8.5" r="7.5" fill="#d8d4c0" stroke="#8a8a7a" />
            <rect x="3" y="4" width="10" height="8" rx="1" fill="#18120a" stroke="#c08018" />
            <path d="M4 5h8v6z" fill="#4a3410" />
          </svg>
          <Title>FactoryTalk Batch View - [PROCEDURE AS SFC]</Title>
          <Caption>
            <CaptionButton aria-label="Minimize"><Arrow d="M3 9H9V11H3Z" /></CaptionButton>
            <CaptionButton aria-label="Maximize"><Arrow d="M2 1H11V10H2ZM3 3V9H10V3Z" /></CaptionButton>
            <CaptionButton aria-label="Close" $gap><Arrow d="M3 2H5L7 4L9 2H11L8 5.5L11 9H9L7 7L5 9H3L6 5.5Z" /></CaptionButton>
          </Caption>
        </TitleBar>
        <Toolbar>
          {tools.map((t) => (
            <ToolButton key={t.label} aria-label={t.label} $pressed={t.pressed}>{t.icon}</ToolButton>
          ))}
        </Toolbar>
        <Body>
          <Work>
            <Panes>
              <StepPane />
              <SfcPane />
              <TablePane />
            </Panes>
            <DetailsPane />
          </Work>
          <Side>
            {sideGroups.map((g, i) => (
              <SideGroup key={i}>
                {g.map((b) => (
                  <SideButton key={b.label} aria-label={b.label} $pressed={b.pressed}>{b.icon}</SideButton>
                ))}
              </SideGroup>
            ))}
          </Side>
        </Body>
        <Annotations />
      </Window>
    </>
  );
}
